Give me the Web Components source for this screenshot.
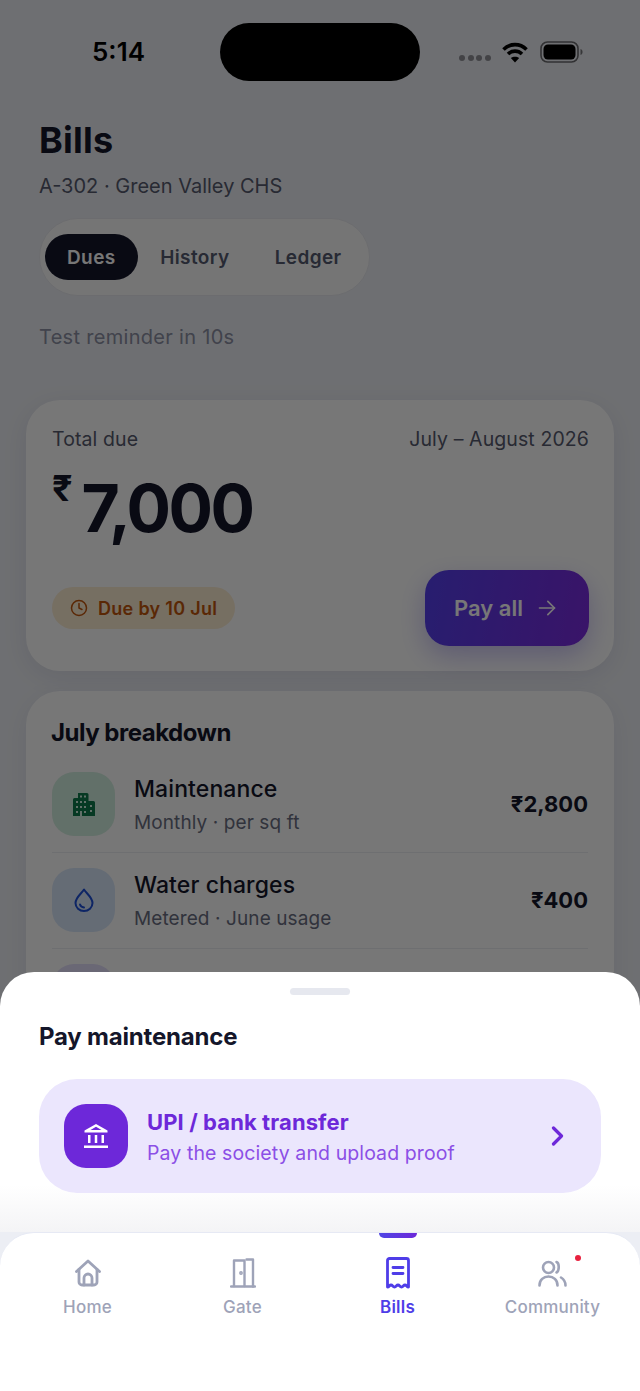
<!DOCTYPE html>
<html lang="en">
<head>
<meta charset="utf-8">
<title>Bills</title>
<style>
  html, body { margin: 0; padding: 0; background: #eceef4; }
  body { font-family: Inter, "Noto Sans", sans-serif; color: #14162a; }
</style>
</head>
<body>
<app-screen>
  <status-bar></status-bar>
  <page-head></page-head>
  <due-card></due-card>
  <breakdown-card>
    <breakdown-row name="Maintenance" note="Monthly · per sq ft" amount="₹2,800" tint="#d3efe0" kind="building"></breakdown-row>
    <breakdown-row name="Water charges" note="Metered · June usage" amount="₹400" tint="#d9e7fb" kind="drop"></breakdown-row>
    <breakdown-row tint="#e4defa" kind="none"></breakdown-row>
  </breakdown-card>
  <pay-sheet slot="dock"></pay-sheet>
  <bottom-nav slot="dock"></bottom-nav>
</app-screen>

<script>
class AppScreen extends HTMLElement {
  constructor() {
    super();
    this.attachShadow({ mode: 'open' });
    this.shadowRoot.innerHTML = `
      <style>
        :host { display: block; position: relative; width: 640px; height: 1391px; overflow: hidden; background: #eceef4; filter: blur(.35px); }
        .scrim { position: absolute; inset: 0; background: rgba(0, 0, 0, .533); backdrop-filter: blur(.5px); }
        .dock { position: absolute; left: 0; right: 0; bottom: 0; display: flex; flex-direction: column; }
      </style>
      <slot></slot>
      <div class="scrim"></div>
      <div class="dock"><slot name="dock"></slot></div>
    `;
  }
}

class StatusBar extends HTMLElement {
  constructor() {
    super();
    this.attachShadow({ mode: 'open' });
    this.shadowRoot.innerHTML = `
      <style>
        :host { display: block; height: 104px; position: relative; }
        .bar { display: grid; grid-template-columns: 220px 200px 220px; padding-top: 23px; }
        .time { font: 600 26px Inter, sans-serif; color: #000; line-height: 58px; padding-left: 92px; }
        .pill { height: 58px; border-radius: 29px; background: #000; }
        .right { display: flex; align-items: center; padding-left: 39px; height: 58px; }
        .dots { display: flex; gap: 2.5px; margin: 12px 11px 0 0; }
        .dots i { width: 6px; height: 6px; border-radius: 50%; background: #8f9096; }
        svg { display: block; }
      </style>
      <div class="bar">
        <div class="time">5:14</div>
        <div class="pill"></div>
        <div class="right">
          <div class="dots"><i></i><i></i><i></i><i></i></div>
          <svg width="26" height="22" viewBox="0 0 26 22" fill="none" stroke="#000" stroke-width="3.6" stroke-linecap="butt">
            <path d="M1.5 8.5C8 2 18 2 24.5 8.5"/>
            <path d="M6 13c4-3.8 10-3.8 14 0"/>
            <path d="M13 21.5l-4.2-4.4c2.4-1.9 6-1.9 8.4 0z" fill="#000" stroke="none"/>
          </svg>
          <svg style="margin-left:12px" width="43" height="22" viewBox="0 0 43 22">
            <rect x="1" y="1" width="37" height="20" rx="6.5" fill="none" stroke="#6a6a6e" stroke-width="1.6"/>
            <rect x="3.5" y="3.5" width="32" height="15" rx="4.5" fill="#000"/>
            <path d="M40.5 8c1.6.5 2 1.6 2 3s-.4 2.500-2 3z" fill="#77777b"/>
          </svg>
        </div>
      </div>
    `;
  }
}

class PageHead extends HTMLElement {
  constructor() {
    super();
    this.attachShadow({ mode: 'open' });
    this.shadowRoot.innerHTML = `
      <style>
        :host { display: block; padding: 0 39px; height: 296px; box-sizing: border-box; }
        h1 { margin: 0; font-size: 36px; font-weight: 700; line-height: 44px; letter-spacing: .2px; color: #14162a; padding-top: 14px; }
        .sub { font-size: 20px; line-height: 28px; color: #565a6e; margin-top: 10px; }
        .tabs { display: flex; width: max-content; align-items: center; height: 78px; box-sizing: border-box; margin-top: 18px; padding: 0 5px; border-radius: 39px; background: #fbfbfb; border: 1px solid #e7e8ee; }
        .tab { height: 46px; line-height: 47px; border-radius: 23px; padding: 0 22px; font-size: 19px; font-weight: 600; color: #555a70; letter-spacing: .4px; }
        .tab.on { background: #14162a; color: #fff; }
        .tab + .tab { padding: 0 22.5px; }
        .note { font-size: 20px; line-height: 28px; color: #8b8fa3; margin-top: 27px; letter-spacing: .3px; }
      </style>
      <h1>Bills</h1>
      <div class="sub">A-302 · Green Valley CHS</div>
      <div class="tabs">
        <div class="tab on">Dues</div><div class="tab">History</div><div class="tab">Ledger</div>
      </div>
      <div class="note">Test reminder in 10s</div>
    `;
  }
}

class DueCard extends HTMLElement {
  constructor() {
    super();
    this.attachShadow({ mode: 'open' });
    this.shadowRoot.innerHTML = `
      <style>
        :host { display: block; margin: 0 26px; height: 271px; box-sizing: border-box; padding: 26px 25px 26px 26px; background: #fff; border-radius: 34px; box-shadow: 0 6px 26px rgba(30, 30, 70, .08); }
        .top { display: flex; justify-content: space-between; font-size: 19.5px; line-height: 26px; color: #565a6e; letter-spacing: .1px; }
        .sum { display: flex; align-items: flex-start; margin-top: 14px; height: 84px; color: #14162a; font-weight: 700; }
        .cur { font-size: 36px; line-height: 44px; margin-right: 9px; }
        .val { font-size: 66px; line-height: 84px; letter-spacing: -2.6px; }
        .foot { display: flex; justify-content: space-between; align-items: center; margin-top: 20px; }
        .chip { display: flex; align-items: center; gap: 10px; height: 42px; padding: 0 18px; border-radius: 21px; background: #fdedd3; color: #c2560c; font-size: 18px; font-weight: 600; letter-spacing: .3px; }
        .pay { display: flex; align-items: center; gap: 14px; height: 76px; padding: 0 32px 0 29px; box-sizing: border-box; border-radius: 24px; background: linear-gradient(100deg, #5540ee, #7c2be0); color: #fff; font-size: 22px; font-weight: 600; box-shadow: 0 10px 26px rgba(80, 60, 220, .3); }
        svg { display: block; }
      </style>
      <div class="top"><span>Total due</span><span>July – August 2026</span></div>
      <div class="sum"><span class="cur">₹</span><span class="val">7,000</span></div>
      <div class="foot">
        <div class="chip">
          <svg width="18" height="18" viewBox="0 0 24 24" fill="none" stroke="currentColor" stroke-width="2" stroke-linecap="round" stroke-linejoin="round"><circle cx="12" cy="12" r="10"/><path d="M12 6v6l4 2"/></svg>
          <span>Due by 10 Jul</span>
        </div>
        <div class="pay">
          <span>Pay all</span>
          <svg width="20" height="20" viewBox="0 0 24 24" fill="none" stroke="currentColor" stroke-width="2" stroke-linecap="round" stroke-linejoin="round"><path d="M3 12h18"/><path d="M13 4l8 8-8 8"/></svg>
        </div>
      </div>
    `;
  }
}

class BreakdownCard extends HTMLElement {
  constructor() {
    super();
    this.attachShadow({ mode: 'open' });
    this.shadowRoot.innerHTML = `
      <style>
        :host { display: block; margin: 20px 26px 0; padding: 26px 26px 0; background: #fff; border-radius: 34px; box-shadow: 0 6px 26px rgba(30, 30, 70, .06); }
        h2 { margin: 0 0 23px -1px; font-size: 24px; line-height: 32px; font-weight: 700; color: #14162a; letter-spacing: -.5px; }
      </style>
      <h2>July breakdown</h2>
      <slot></slot>
    `;
  }
}

const rowIcons = {
  building: `<svg width="22" height="23" viewBox="0 0 22 23"><path fill="#0e7a4c" d="M5 0h9a1.500 1.500 0 0 1 1.500 1.500V8h5a1.500 1.500 0 0 1 1.500 1.500V23H0V6.500A1.500 1.500 0 0 1 1.500 5H5z"/><g fill="#d3efe0"><rect x="7" y="2.500" width="2" height="2"/><rect x="11" y="2.500" width="2" height="2"/><rect x="3" y="8" width="2" height="2"/><rect x="7" y="8" width="2" height="2"/><rect x="11" y="8" width="2" height="2"/><rect x="3" y="13" width="2" height="2"/><rect x="7" y="13" width="2" height="2"/><rect x="11" y="13" width="2" height="2"/><rect x="17" y="12" width="2" height="2"/><rect x="17" y="17" width="2" height="2"/><rect x="3" y="18" width="2" height="2"/><rect x="11" y="18" width="2" height="2"/><rect x="7" y="18" width="2" height="5"/></g></svg>`,
  drop: `<svg width="20" height="24" viewBox="0 0 20 24" fill="none" stroke="#1d4fd8" stroke-width="2" stroke-linecap="round" stroke-linejoin="round"><path d="M10 1.500C8 5 1.500 9.500 1.500 15a8.500 8 0 0 0 17 0C18.500 9.500 12 5 10 1.500z"/><path d="M6 16.500c.5 1.800 2 2.800 4 3"/></svg>`,
  none: ''
};

class BreakdownRow extends HTMLElement {
  constructor() {
    super();
    this.attachShadow({ mode: 'open' });
  }

  connectedCallback() {
    const name = this.getAttribute('name') || '';
    const note = this.getAttribute('note') || '';
    const amount = this.getAttribute('amount') || '';
    const tint = this.getAttribute('tint') || '#eee';
    const kind = this.getAttribute('kind') || 'none';
    this.shadowRoot.innerHTML = `
      <style>
        :host { display: block; }
        .row { display: flex; align-items: flex-start; height: 64px; padding-bottom: 16px; margin-bottom: 16px; position: relative; }
        .row::after { content: ''; position: absolute; left: 0; right: 0; bottom: -1px; height: 1.500px; background: #eceef3; }
        .ic { width: 63px; height: 64px; border-radius: 22px; background: ${tint}; display: flex; align-items: center; justify-content: center; margin-right: 19px; }
        .txt { flex: 1; margin-top: 2px; }
        .name { font-size: 23px; line-height: 30px; font-weight: 500; color: #14162a; letter-spacing: .1px; }
        .note { font-size: 19px; line-height: 26px; color: #6a6e82; margin-top: 6px; letter-spacing: .1px; }
        .amt { font-size: 22px; line-height: 64px; font-weight: 700; color: #14162a; }
      </style>
      <div class="row">
        <div class="ic">${rowIcons[kind]}</div>
        <div class="txt"><div class="name">${name}</div><div class="note">${note}</div></div>
        <div class="amt">${amount}</div>
      </div>
    `;
  }
}

class PaySheet extends HTMLElement {
  constructor() {
    super();
    this.attachShadow({ mode: 'open' });
    this.shadowRoot.innerHTML = `
      <style>
        :host { display: block; height: 260px; box-sizing: border-box; padding: 16px 39px 0; border-radius: 34px 34px 0 0; background: linear-gradient(#fff 82%, #f4f4f6); }
        .handle { width: 60px; height: 7px; border-radius: 4px; background: #e6e8ef; margin: 0 auto; }
        h3 { margin: 26px 0 0; font-size: 24px; line-height: 32px; font-weight: 700; color: #14162a; letter-spacing: -.2px; }
        .opt { display: flex; align-items: center; height: 114px; margin-top: 26px; padding: 0 37px 0 25px; border-radius: 38px; background: #ebe6fd; }
        .ic { width: 64px; height: 64px; border-radius: 22px; background: #6d28d9; display: flex; align-items: center; justify-content: center; margin-right: 19px; }
        .txt { flex: 1; padding-top: 2px; }
        .t { font-size: 22px; line-height: 28px; font-weight: 700; color: #6d28d9; letter-spacing: .1px; }
        .s { font-size: 19.500px; line-height: 28px; color: #8b4fe6; margin-top: 3px; letter-spacing: .1px; }
        svg { display: block; }
      </style>
      <div class="handle"></div>
      <h3>Pay maintenance</h3>
      <div class="opt">
        <div class="ic">
          <svg width="26" height="26" viewBox="0 0 26 26" fill="#fff"><path d="M13 1L1.500 7.500v2h23v-2zM13 3.800l5.500 3.200h-11z" fill-rule="evenodd"/><rect x="5" y="12" width="2.500" height="8"/><rect x="11.750" y="12" width="2.500" height="8"/><rect x="18.500" y="12" width="2.500" height="8"/><rect x="1" y="22.500" width="24" height="2.500"/></svg>
        </div>
        <div class="txt"><div class="t">UPI / bank transfer</div><div class="s">Pay the society and upload proof</div></div>
        <svg width="13" height="20" viewBox="0 0 13 20" fill="none" stroke="#6d28d9" stroke-width="3.200" stroke-linecap="round" stroke-linejoin="round"><path d="M2.500 2l8 8-8 8"/></svg>
      </div>
    `;
  }
}

class NavItem extends HTMLElement {
  constructor() {
    super();
    this.attachShadow({ mode: 'open' });
    this.shadowRoot.innerHTML = `
      <style>
        :host { display: flex; flex-direction: column; align-items: center; position: relative; color: #9ea3b8; font-size: 17px; font-weight: 500; letter-spacing: .2px; }
        :host([active]) { color: #4f3de8; font-weight: 600; }
        .icon { height: 36px; display: flex; align-items: center; justify-content: center; }
        .label { margin-top: 4px; line-height: 24px; }
        ::slotted(svg) { display: block; }
      </style>
      <div class="icon"><slot name="icon"></slot></div>
      <div class="label"><slot></slot></div>
    `;
  }
}

class BottomNav extends HTMLElement {
  constructor() {
    super();
    this.attachShadow({ mode: 'open' });
    this.shadowRoot.innerHTML = `
      <style>
        :host { display: block; height: 159px; background: #eceef4; }
        .nav { position: relative; height: 159px; box-sizing: border-box; background: #fff; border-radius: 34px 34px 0 0; border-top: 1px solid #e6e9f4; display: grid; grid-template-columns: repeat(4, 155px); padding: 22px 10px 0; }
        .mark { position: absolute; left: 379px; top: 0; width: 38px; height: 5px; border-radius: 0 0 6px 6px; background: linear-gradient(90deg, #4f46e5, #6d28d9); }
        .dot { position: absolute; left: 575px; top: 22px; width: 6px; height: 6px; border-radius: 50%; background: #e8213f; }
        svg { display: block; }
      </style>
      <div class="nav">
        <div class="mark"></div>
        <nav-item>
          <svg slot="icon" width="26" height="28" viewBox="0 0 26 28" fill="none" stroke="currentColor" stroke-width="2.800" stroke-linecap="round" stroke-linejoin="round"><path d="M1.500 12.500L13 2l11.500 10.500"/><path d="M4 10.500V23a3 3 0 0 0 3 3h12a3 3 0 0 0 3-3V10.500"/><path d="M9 26v-7a4 4 0 0 1 8 0v7"/></svg>
          Home
        </nav-item>
        <nav-item>
          <svg slot="icon" width="26" height="30" viewBox="0 0 26 30" fill="none" stroke="currentColor" stroke-width="2.400" stroke-linecap="round" stroke-linejoin="round"><path d="M1 28.500h24"/><path d="M4 28.500V3h10.500v25.500" transform="translate(0 -.5)"/><path d="M16.500 1.500H23v27"/><circle cx="11" cy="15" r=".7" fill="currentColor"/></svg>
          Gate
        </nav-item>
        <nav-item active>
          <svg slot="icon" width="24" height="32" viewBox="0 0 24 32" fill="none" stroke="currentColor" stroke-width="2.800" stroke-linecap="round" stroke-linejoin="round"><path d="M1.500 30V3.500a2 2 0 0 1 2-2h17a2 2 0 0 1 2 2V30c-1.800 0-1.800-2-3.500-2s-1.800 2-3.500 2-1.800-2-3.500-2-1.800 2-3.500 2-1.800-2-3.500-2S3.300 30 1.500 30z"/><path d="M7 10.500h10M7 16.500h10"/></svg>
          Bills
        </nav-item>
        <nav-item>
          <svg slot="icon" width="29" height="27" viewBox="0 0 29 27" fill="none" stroke="currentColor" stroke-width="2.600" stroke-linecap="round" stroke-linejoin="round"><circle cx="10.500" cy="7.500" r="5.500"/><path d="M1.500 25.500c0-5.500 4-9 9-9s9 3.500 9 9"/><path d="M18.500 2c3 1 3 9 0 10.500"/><path d="M23 17.500c2.500 1.500 4.500 4 4.500 8"/></svg>
          Community
        </nav-item>
        <div class="dot"></div>
      </div>
    `;
  }
}

customElements.define('app-screen', AppScreen);
customElements.define('status-bar', StatusBar);
customElements.define('page-head', PageHead);
customElements.define('due-card', DueCard);
customElements.define('breakdown-card', BreakdownCard);
customElements.define('breakdown-row', BreakdownRow);
customElements.define('pay-sheet', PaySheet);
customElements.define('nav-item', NavItem);
customElements.define('bottom-nav', BottomNav);
</script>
</body>
</html>
